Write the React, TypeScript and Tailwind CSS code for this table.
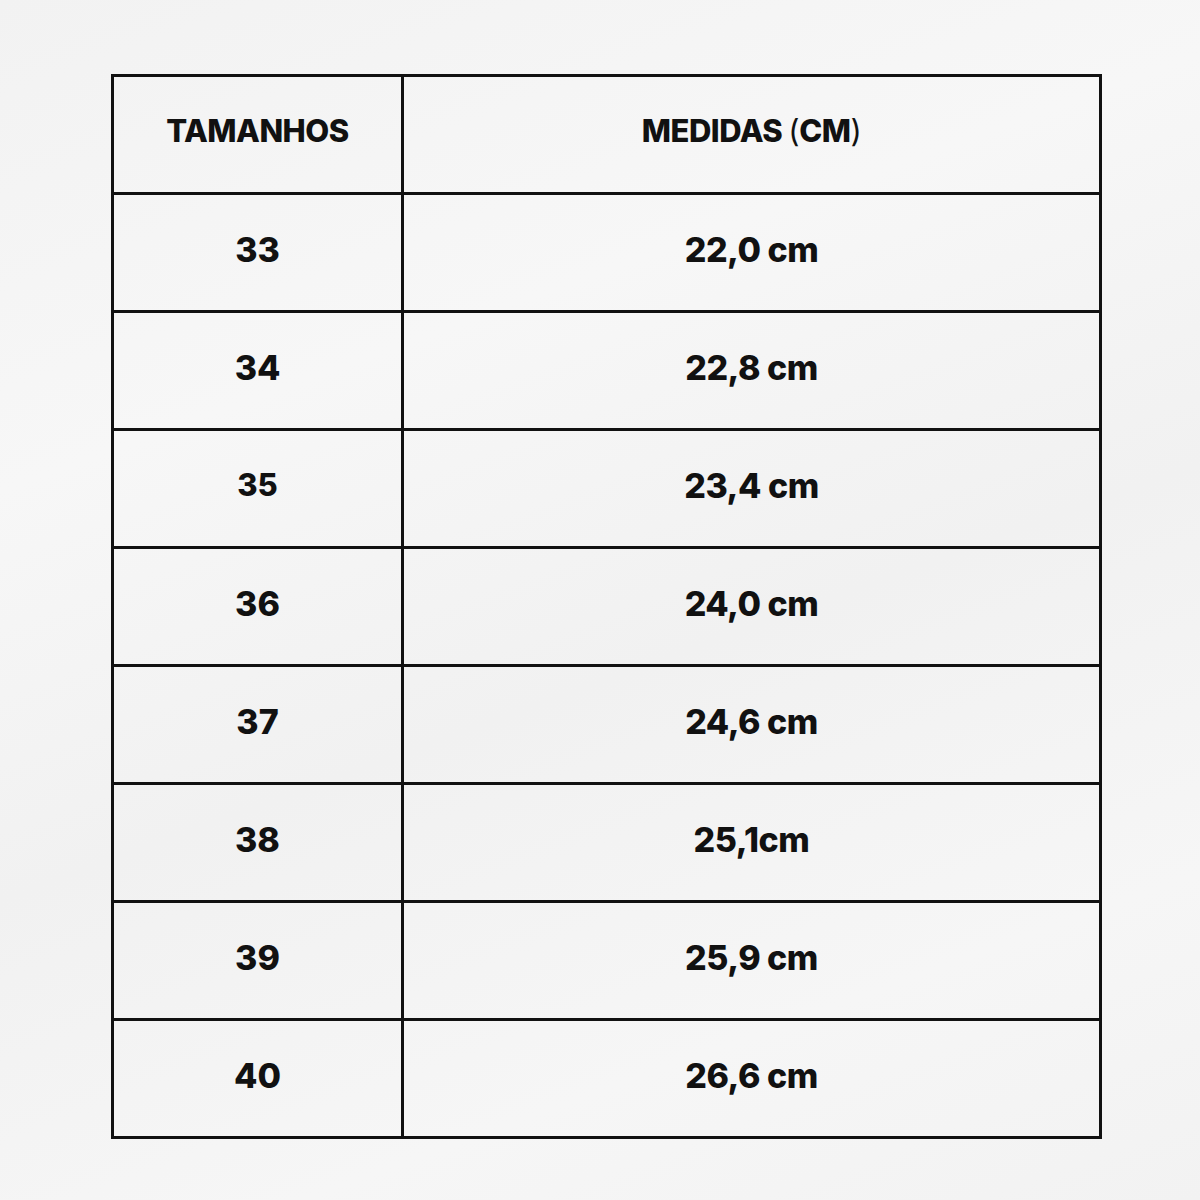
const rows: [string, string][] = [
  ["33", "22,0 cm"],
  ["34", "22,8 cm"],
  ["35", "23,4 cm"],
  ["36", "24,0 cm"],
  ["37", "24,6 cm"],
  ["38", "25,1cm"],
  ["39", "25,9 cm"],
  ["40", "26,6 cm"],
];

export default function App() {
  return (
    <div
      className="h-[1200px] w-[1200px] bg-[#f4f4f4] bg-[linear-gradient(160deg,#f2f2f2_0%,#f7f7f7_30%,#f1f1f1_55%,#f6f6f6_80%,#f2f2f2_100%)] pl-[111px] pt-[74px]"
      style={{ fontFamily: "Inter, 'Liberation Sans', sans-serif" }}
    >
      <div className="w-[991px] border-x-[3px] border-t-[3px] border-[#111]">
        <div className="flex h-[118px] border-b-[3px] border-[#111]">
          <div className="flex w-[290px] items-center justify-center border-r-[3px] border-[#111] pb-[6px] text-[31px] font-extrabold tracking-[-0.5px] text-[#111]">
            TAMANHOS
          </div>
          <div className="flex flex-1 items-center justify-center pb-[6px] text-[31px] font-extrabold tracking-[-0.5px] text-[#111]">
            MEDIDAS <span className="ml-[6px] font-normal">(</span>CM<span className="font-normal">)</span>
          </div>
        </div>
        {rows.map(([size, cm]) => (
          <div key={size} className="flex h-[118px] border-b-[3px] border-[#111]">
            <div
              className={
                size === "35"
                  ? "flex w-[290px] items-center justify-center border-r-[3px] border-[#111] pb-[6px] text-[31px] font-extrabold text-[#111]"
                  : "flex w-[290px] items-center justify-center border-r-[3px] border-[#111] pb-[6px] text-[34px] font-extrabold text-[#111]"
              }
            >
              {size}
            </div>
            <div className="flex flex-1 items-center justify-center pb-[6px] text-[34px] font-extrabold tracking-[-0.5px] text-[#111]">
              {cm}
            </div>
          </div>
        ))}
      </div>
    </div>
  );
}
